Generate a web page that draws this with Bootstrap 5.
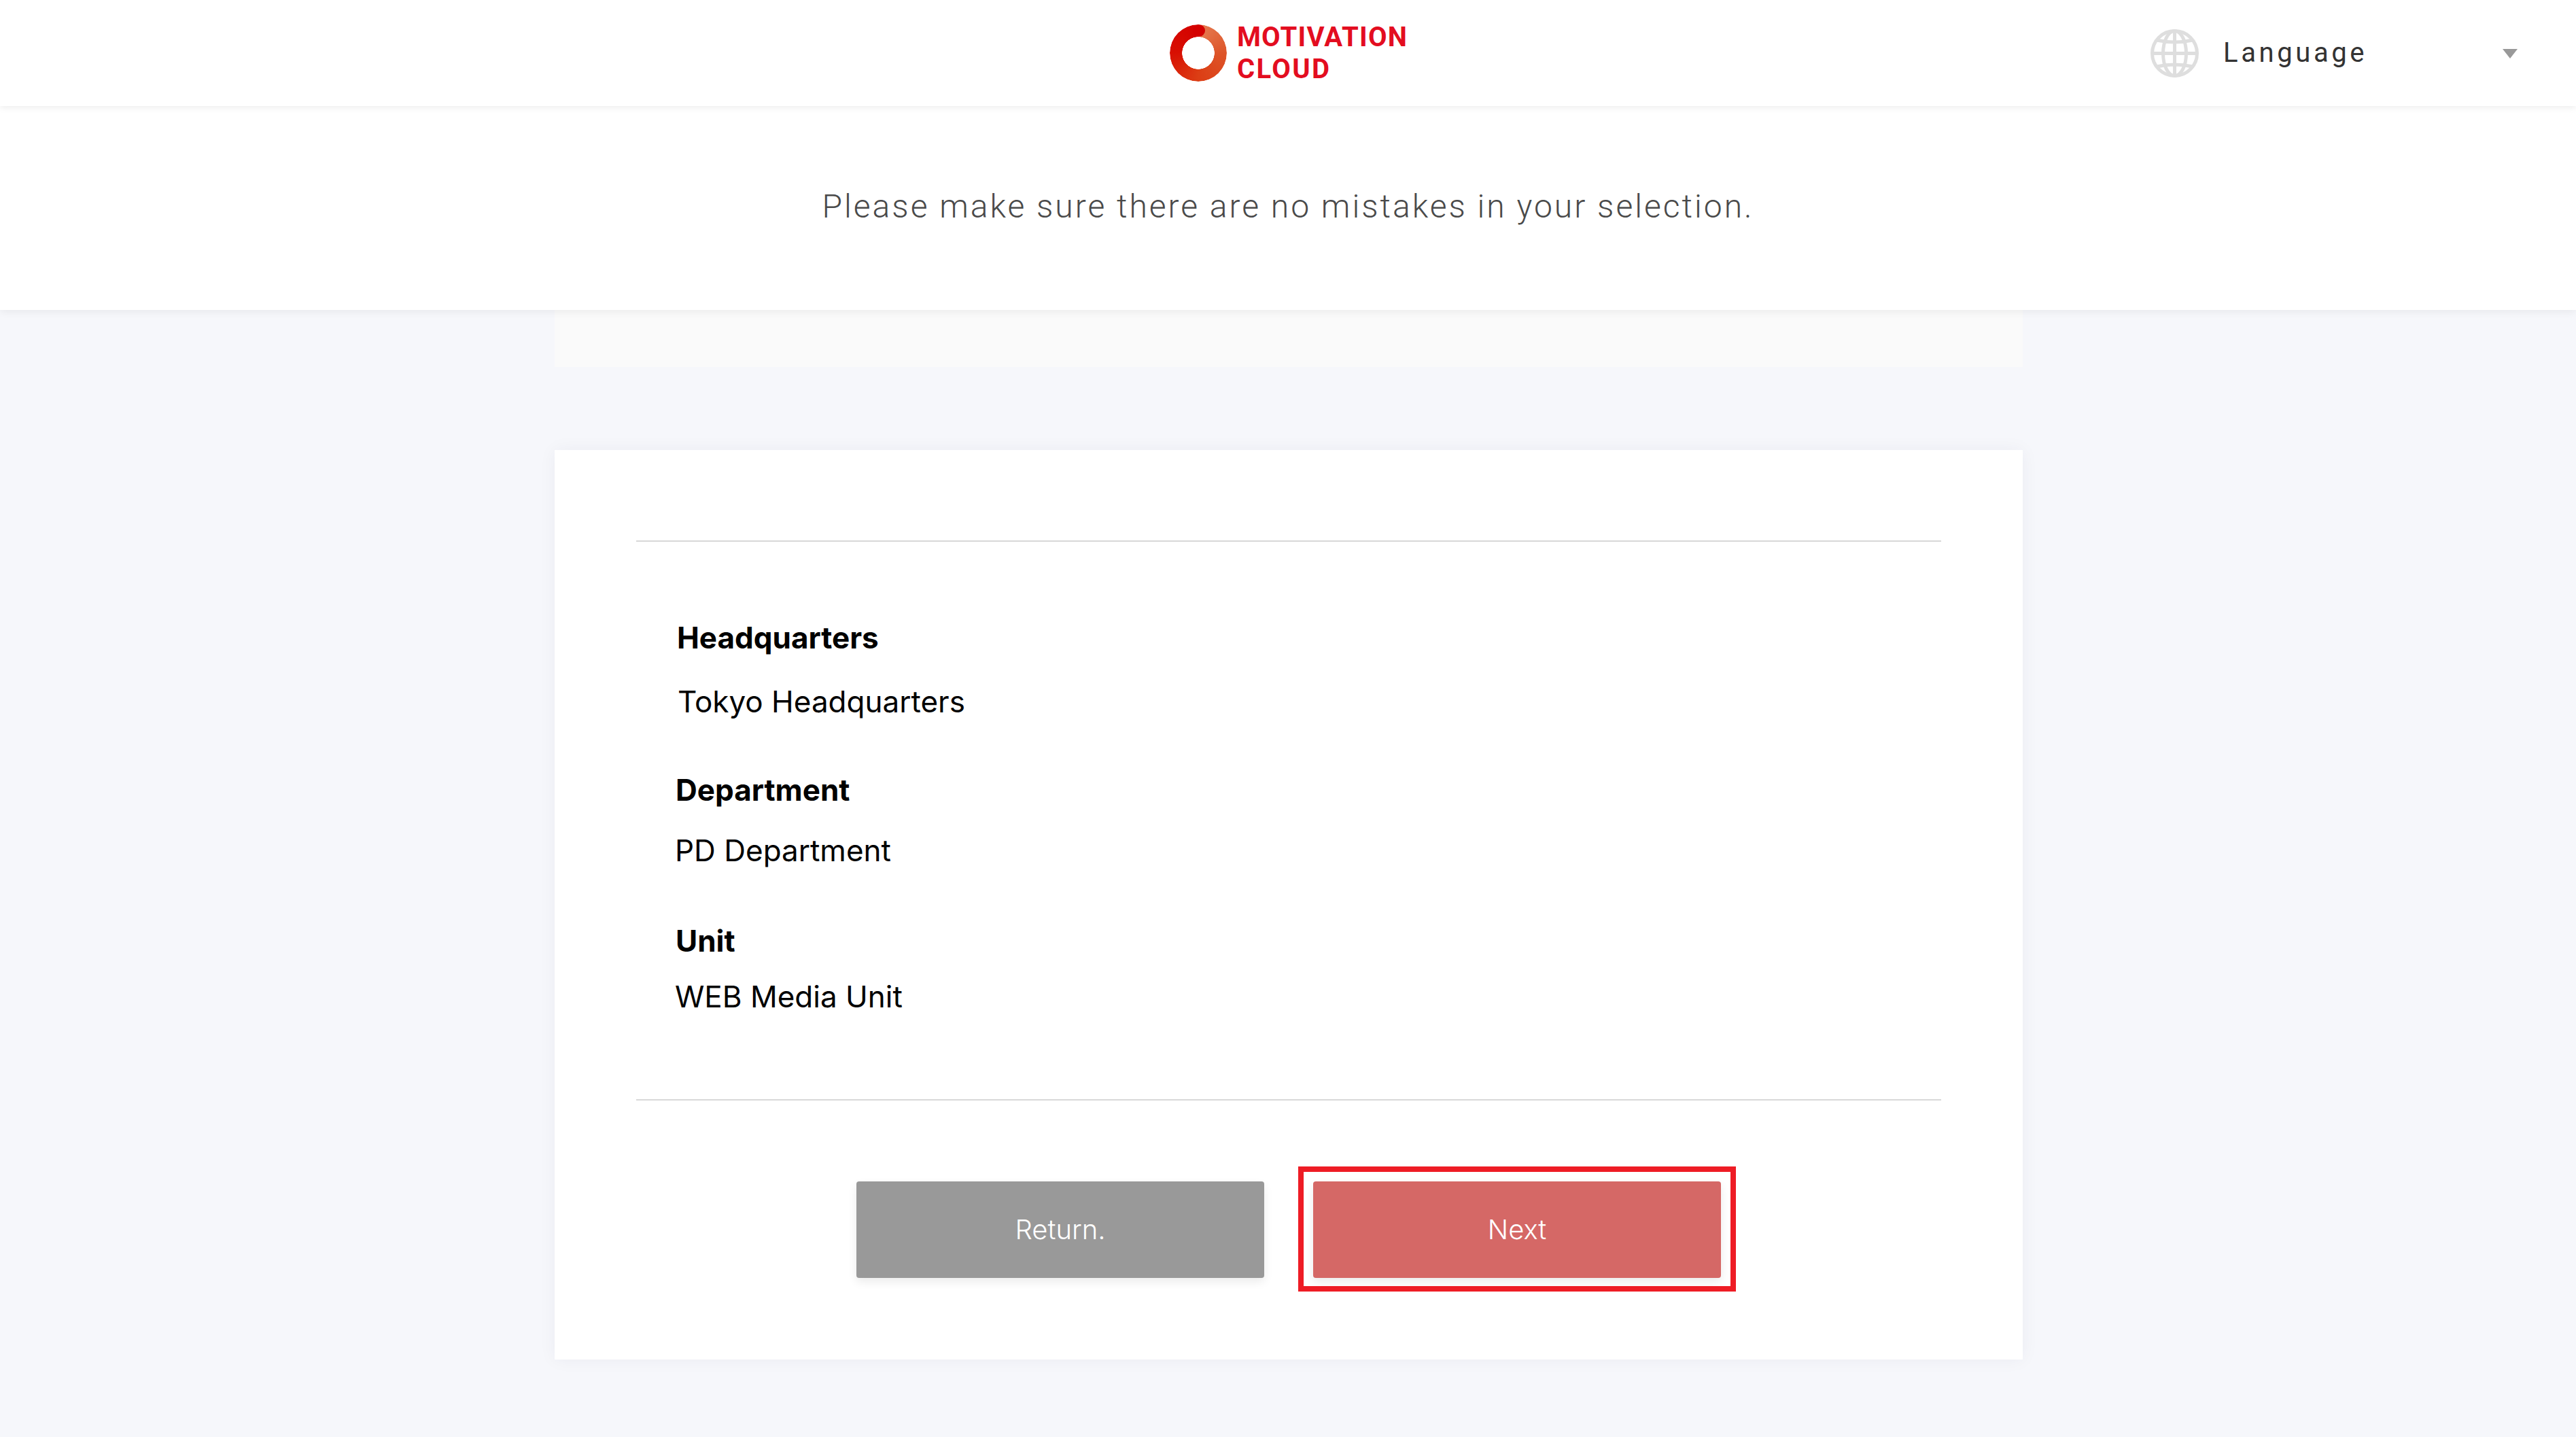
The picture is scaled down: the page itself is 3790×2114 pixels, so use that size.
<!DOCTYPE html>
<html lang="en">
  <head>
    <meta charset="UTF-8" />
    <meta name="viewport" content="width=device-width, initial-scale=1.0" />
    <title>Motivation Cloud - Confirm</title>
    <link
      href="https://cdn.jsdelivr.net/npm/bootstrap@5.3.2/dist/css/bootstrap.min.css"
      rel="stylesheet"
    />
    <style>
      body {
        background-color: #f6f7fb;
        min-height: 2114px;
        font-family: "Inter", "Liberation Sans", sans-serif;
        color: #000;
      }
      .top-bar {
        height: 156px;
        background: #fff;
        display: grid;
        grid-template-columns: 1fr auto 1fr;
        align-items: center;
        box-shadow: 0 2px 10px rgba(0, 0, 0, 0.08);
        position: relative;
        z-index: 3;
      }
      .logo-wrap {
        padding-left: 2px;
      }
      .logo-ring {
        width: 84px;
        height: 84px;
        border-radius: 50%;
        position: relative;
        background: conic-gradient(
          from 2deg,
          #e67c52 0deg,
          #dd5428 90deg,
          #dc3d14 180deg,
          #d80f02 270deg,
          #d40000 360deg
        );
        -webkit-mask: radial-gradient(circle, transparent 23.5px, #000 24px);
        mask: radial-gradient(circle, transparent 23.5px, #000 24px);
      }
      .logo-ring::after {
        content: "";
        position: absolute;
        top: 0;
        left: 34px;
        width: 18px;
        height: 18px;
        border-radius: 50%;
        background: #d40000;
      }
      .logo-text {
        font-family: "Roboto", "Liberation Sans", sans-serif;
        font-weight: 700;
        font-size: 40px;
        line-height: 47px;
        letter-spacing: 1.2px;
        color: #e30d20;
        margin-left: 15px;
      }
      .logo-text span {
        letter-spacing: 2.4px;
      }
      .lang-box {
        width: 540px;
        margin-right: 86px;
        font-family: "Roboto", "Liberation Sans", sans-serif;
        font-size: 40px;
        letter-spacing: 4.6px;
        color: #333;
      }
      .lang-globe {
        width: 71px;
        height: 71px;
        margin-right: 36px;
      }
      .lang-arrow {
        width: 0;
        height: 0;
        margin-top: 2px;
        border-left: 11.5px solid transparent;
        border-right: 11.5px solid transparent;
        border-top: 14px solid #999;
      }
      .notice-band {
        background: #fff;
        padding: 118px 0 122px;
        font-family: "Roboto", "Liberation Sans", sans-serif;
        font-weight: 300;
        font-size: 48px;
        line-height: 60px;
        letter-spacing: 3px;
        color: #4a4a4a;
        text-align: center;
        box-shadow: 0 2px 12px rgba(0, 0, 0, 0.07);
        position: relative;
        z-index: 2;
      }
      .page-col {
        margin: 0 814px 0 816px;
      }
      .shade-strip {
        height: 84px;
        background: #fafafa;
      }
      .confirm-panel {
        margin-top: 122px;
        height: 1338px;
        background: #fff;
        padding: 133px 120px 0;
        box-shadow: 0 0 24px rgba(30, 30, 70, 0.05);
      }
      .rule-line {
        height: 2px;
        background: #d8d8d8;
      }
      .detail-list {
        padding: 111px 0 121px 57px;
        font-size: 44px;
        line-height: 60px;
      }
      .detail-list .lbl {
        font-weight: 700;
      }
      .btn-row {
        margin-top: 119px;
        gap: 72px;
      }
      .act-btn {
        width: 600px;
        height: 142px;
        border: 0;
        border-radius: 4px;
        color: #fff;
        font-family: "Inter", "Liberation Sans", sans-serif;
        font-size: 40px;
        font-weight: 300;
        box-shadow: 0 6px 14px rgba(0, 0, 0, 0.08);
      }
      .act-return,
      .act-return:hover {
        background: #999;
        color: #fff;
      }
      .act-next,
      .act-next:hover {
        background: #d56866;
        color: #fff;
      }
      .next-frame {
        top: -22px;
        left: -22px;
        right: -22px;
        bottom: -20px;
        border: 8px solid #ee1c25;
        pointer-events: none;
      }
      .gap-0 { margin-left: 3px; }
      .gap-a { margin-top: 34px; margin-left: 4px; }
      .gap-b { margin-top: 70px; margin-left: 1px; }
      .gap-c { margin-top: 29px; }
      .gap-d { margin-top: 73px; margin-left: 1px; }
      .gap-e { margin-top: 22px; }
    </style>
  </head>
  <body>
    <header class="top-bar">
      <div></div>
      <div class="logo-wrap d-flex align-items-center">
        <div class="logo-ring"></div>
        <div class="logo-text">MOTIVATION<br /><span>CLOUD</span></div>
      </div>
      <div class="d-flex justify-content-end">
        <div class="lang-box d-flex align-items-center">
          <svg class="lang-globe" viewBox="0 0 71 71" fill="none" stroke="#dedede" stroke-width="5">
            <circle cx="35.5" cy="35.5" r="33" />
            <ellipse cx="35.5" cy="35.5" rx="17" ry="33" />
            <path d="M35.5 2.5V68.5M2.5 35.5H68.5M9 16Q35.5 22 62 16M9 55Q35.5 49 62 55" />
          </svg>
          <span>Language</span>
          <span class="lang-arrow ms-auto"></span>
        </div>
      </div>
    </header>

    <div class="notice-band">Please make sure there are no mistakes in your selection.</div>

    <main class="page-col">
      <div class="shade-strip"></div>
      <section class="confirm-panel">
        <div class="rule-line"></div>
        <div class="detail-list">
          <div class="lbl gap-0">Headquarters</div>
          <div class="gap-a">Tokyo Headquarters</div>
          <div class="lbl gap-b">Department</div>
          <div class="gap-c">PD Department</div>
          <div class="lbl gap-d">Unit</div>
          <div class="gap-e">WEB Media Unit</div>
        </div>
        <div class="rule-line"></div>
        <div class="btn-row d-flex justify-content-center">
          <button type="button" class="btn act-btn act-return">Return.</button>
          <div class="position-relative">
            <button type="button" class="btn act-btn act-next">Next</button>
            <div class="next-frame position-absolute"></div>
          </div>
        </div>
      </section>
    </main>

    <script src="https://cdn.jsdelivr.net/npm/bootstrap@5.3.2/dist/js/bootstrap.bundle.min.js"></script>
  </body>
</html>
